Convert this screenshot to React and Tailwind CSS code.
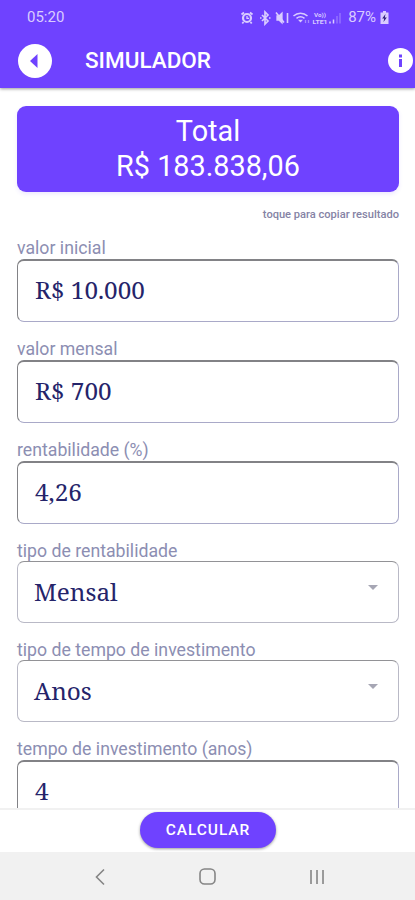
import clsx from 'clsx';

const fields = [
  { label: 'valor inicial', value: 'R$ 10.000', className: 'mt-[17px]' },
  { label: 'valor mensal', value: 'R$ 700', className: 'mt-[17px]' },
  { label: 'rentabilidade (%)', value: '4,26', className: 'mt-[17px]' },
  { label: 'tipo de rentabilidade', value: 'Mensal', select: true, className: 'mt-4' },
  { label: 'tipo de tempo de investimento', value: 'Anos', select: true, className: 'mt-4' },
  { label: 'tempo de investimento (anos)', value: '4', className: 'mt-[17px]' }
];

function StatusIcons() {
  return (
    <svg width="102" height="16" viewBox="0 0 102 16" fill="none" stroke="currentColor" strokeWidth="1.3">
      {/* alarm */}
      <circle cx="7" cy="8" r="4" strokeWidth="2.2" />
      <path d="M7 6v2.3h2" />
      <path d="M1.500 4.500l2.500-2M12.500 4.500l-2.500-2M3.500 12l-1.200 1.500M10.500 12l1.200 1.500" strokeWidth="1.800" />
      {/* bluetooth */}
      <path d="M22 5l6 6-3 3V2l3 3-6 6" strokeWidth="1.700" />
      <path d="M20 8h1.500M29 8h1.500" strokeWidth="1.700" />
      {/* muted, vibrate */}
      <path d="M37 6h2l3-3v10l-3-3h-2z" fill="currentColor" />
      <path d="M36 2.500l8 10M47.500 3v10" strokeWidth="1.600" />
      {/* wifi */}
      <path d="M53.500 6c4-3.600 10-3.600 14 0M56.500 8.300c2.500-2 5.500-2 8 0" strokeWidth="1.500" />
      <path d="M58 9.800h5l-2.500 2.700z" fill="currentColor" stroke="none" />
      <path d="M65.500 13v-3M68.500 13v-3" opacity="0.5" />
      <text x="74" y="6.600" fontSize="5" fontWeight="700" textLength="12" lengthAdjust="spacingAndGlyphs" fill="currentColor" stroke="none">Vo))</text>
      <text x="72.500" y="13.600" fontSize="5" fontWeight="700" textLength="15" lengthAdjust="spacingAndGlyphs" fill="currentColor" stroke="none">LTE1</text>
      <path d="M90 13.500v-2M93.500 13.500v-4" strokeWidth="1.500" />
      <path d="M97 13.500V6M100 13.500V3" strokeWidth="1.500" opacity="0.35" />
    </svg>
  );
}

function Header() {
  return (
    <header className="relative z-10 h-[88px] shrink-0 bg-[#6f42ff] text-white shadow-[0_1px_3px_rgba(0,0,0,0.4)]">
      <div className="flex h-[35px] items-center pl-[27px] pr-[26px] text-[15px] text-[#d9ccff]">
        <span>05:20</span>
        <div className="ml-auto flex items-center">
          <StatusIcons />
          <span className="ml-[6px] text-[15px]">87%</span>
          <svg className="ml-1" width="9" height="13" viewBox="0 0 9 13">
            <path d="M3 0h3v1.500h2.500V13h-8V1.500H3z" fill="currentColor" />
            <path d="M5.500 3L2.200 7.500h2L3.500 11l3.300-4.500h-2z" fill="#30207c" />
          </svg>
        </div>
      </div>
      <div className="flex h-[51px] items-center pl-[18px] pr-[2px]">
        <button type="button" aria-label="Voltar">
          <svg width="34" height="34" viewBox="0 0 34 34">
            <circle cx="17" cy="17" r="17" fill="#fff" />
            <path d="M19.500 10v14L12 17z" fill="#6f42ff" />
          </svg>
        </button>
        <h1 className="ml-[33px] text-[22.5px] font-medium leading-none">SIMULADOR</h1>
        <button type="button" aria-label="Informações" className="ml-auto">
          <svg width="25" height="25" viewBox="0 0 25 25">
            <circle cx="12.500" cy="12.500" r="12.500" fill="#fff" />
            <path d="M11 6.500h3v3h-3zM11 11h3v8h-3z" fill="#6f42ff" />
          </svg>
        </button>
      </div>
    </header>
  );
}

function Field({ label, value, select, className }) {
  return (
    <div className={className}>
      <label
        className={clsx(
          'block h-[21px] whitespace-nowrap text-[17.7px] text-[#8c8eb2]',
          select ? 'leading-[23px]' : 'leading-[21px]'
        )}
      >
        {label}
      </label>
      <div
        className={clsx(
          'flex items-center justify-between rounded-[7px] border pr-5',
          select
            ? 'h-[62px] border-[#b9b9c6] border-t-[#929296] pl-4'
            : 'h-[63px] border-[#a9a9c8] border-t-2 border-t-[#828286] border-l-[#828286] pb-px pl-[17px]'
        )}
      >
        <span className="text-[24.3px] leading-none text-[#25246a] [font-family:'Noto_Serif','DejaVu_Serif',serif]">
          {value}
        </span>
        {select && (
          <svg className="mb-[10px]" width="10" height="5" viewBox="0 0 10 5">
            <path d="M0 0h10L5 5z" fill="#a6a6b4" />
          </svg>
        )}
      </div>
    </div>
  );
}

export default function App() {
  return (
    <div className="flex h-[900px] w-[415px] flex-col overflow-hidden bg-white font-['Roboto',sans-serif]">
      <Header />
      <main className="min-h-0 flex-1 overflow-hidden pl-[17px] pr-4 pt-[18px]">
        <button
          type="button"
          className="flex h-[86px] w-full flex-col items-center justify-center rounded-[9px] bg-[#6f42ff] text-[28.8px] leading-[35px] text-white shadow-[0_2px_4px_rgba(111,66,255,0.12)]"
        >
          <span>Total</span>
          <span>R$ 183.838,06</span>
        </button>
        <p className="mt-4 h-[13px] text-right text-[11.1px] font-medium leading-[13px] text-[#8583a5]">
          toque para copiar resultado
        </p>
        {fields.map((field) => (
          <Field key={field.label} {...field} />
        ))}
      </main>
      <footer className="flex h-[44px] shrink-0 justify-center border-t-2 border-[#f1f1f1] bg-white pt-[2px]">
        <button
          type="button"
          className="ml-px h-[36px] w-[136px] rounded-full bg-[#6f42ff] pt-px text-[15.5px] font-medium tracking-[0.9px] text-white shadow-[0_1px_3px_rgba(0,0,0,0.4)]"
        >
          CALCULAR
        </button>
      </footer>
      <nav className="flex h-[48px] shrink-0 items-center justify-between bg-[#f1f1f1] pl-[94px] pr-[90px] pt-px text-[#858585]">
        <svg width="12" height="18" viewBox="0 0 12 18" fill="none" stroke="currentColor" strokeWidth="1.600">
          <path d="M10 1.500L2.500 9l7.500 7.500" />
        </svg>
        <svg width="17" height="17" viewBox="0 0 17 17" fill="none" stroke="currentColor" strokeWidth="1.600">
          <rect x="1" y="1" width="15" height="15" rx="4.500" />
        </svg>
        <svg width="16" height="16" viewBox="0 0 16 16" fill="none" stroke="currentColor" strokeWidth="1.600">
          <path d="M2 1v14M8 1v14M14 1v14" />
        </svg>
      </nav>
    </div>
  );
}
